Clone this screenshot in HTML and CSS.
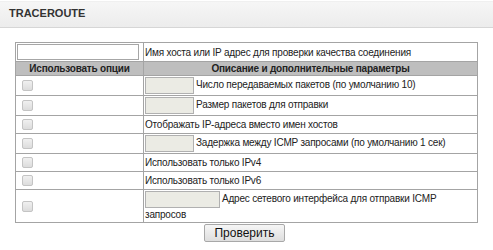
FILE: index.html
```html
<!DOCTYPE html>
<html lang="ru">
<head>
  <meta charset="UTF-8">
  <title>Traceroute</title>
  <link rel="stylesheet" href="styles.css">
</head>
<body>
  <div class="panel-head">TRACEROUTE</div>

  <form class="panel-body">
    <table class="opts">
      <tr>
        <td class="col-use"><input type="text" class="host"></td>
        <td>Имя хоста или IP адрес для проверки качества соединения</td>
      </tr>
      <tr class="head">
        <th>Использовать опции</th>
        <th>Описание и дополнительные параметры</th>
      </tr>
      <tr>
        <td class="col-use"><input type="checkbox" class="chk"></td>
        <td><input type="text" class="val">Число передаваемых пакетов (по умолчанию 10)</td>
      </tr>
      <tr>
        <td class="col-use"><input type="checkbox" class="chk"></td>
        <td><input type="text" class="val">Размер пакетов для отправки</td>
      </tr>
      <tr>
        <td class="col-use"><input type="checkbox" class="chk"></td>
        <td>Отображать IP-адреса вместо имен хостов</td>
      </tr>
      <tr>
        <td class="col-use"><input type="checkbox" class="chk"></td>
        <td><input type="text" class="val">Задержка между ICMP запросами (по умолчанию 1 сек)</td>
      </tr>
      <tr>
        <td class="col-use"><input type="checkbox" class="chk"></td>
        <td>Использовать только IPv4</td>
      </tr>
      <tr>
        <td class="col-use"><input type="checkbox" class="chk"></td>
        <td>Использовать только IPv6</td>
      </tr>
      <tr>
        <td class="col-use"><input type="checkbox" class="chk"></td>
        <td><input type="text" class="val wide">Адрес сетевого интерфейса для отправки ICMP запросов</td>
      </tr>
    </table>
    <div class="actions">
      <button type="button" class="btn">Проверить</button>
    </div>
  </form>
</body>
</html>
```

FILE: styles.css
```css
body {
  margin: 0;
  background: #fff;
  font-family: "Liberation Sans", Arial, sans-serif;
  font-size: 10px;
  letter-spacing: -0.2px;
  color: #222;
}

.panel-head {
  height: 25px;
  line-height: 23px;
  margin-top: 1px;
  padding-left: 9px;
  font-weight: bold;
  font-size: 11px;
  letter-spacing: 0;
  color: #333;
  background: linear-gradient(#f6f6f6, #ececec);
  border-top: 1px solid #f0f0f0;
  border-bottom: 1px solid #d6d6d6;
}

.panel-body {
  padding: 14px 0 0 15px;
}

.opts {
  width: 463px;
  border-collapse: collapse;
  border: 1px solid #9c9c9c;
}

.opts td,
.opts th {
  border: 1px solid #a4a4a4;
  padding: 1px 1px;
  height: 15px;
  line-height: 13px;
  vertical-align: middle;
  text-align: left;
}

.opts .col-use {
  width: 125px;
  padding-left: 1px;
}

.opts .head th {
  background: #bebebe;
  font-weight: bold;
  text-align: center;
  height: 12px;
  padding: 0;
}

.host {
  display: block;
  box-sizing: border-box;
  width: 122px;
  height: 16px;
  margin: 0;
  border: 1px solid #a6a6a6;
  background: #fff;
}

.val {
  box-sizing: border-box;
  width: 49px;
  height: 17px;
  margin: 0 2px 0 0;
  border: 1px solid #b0b0b0;
  background: #ebebe4;
  vertical-align: middle;
}

.val.wide {
  width: 75px;
}

.chk {
  appearance: none;
  display: block;
  width: 11px;
  height: 11px;
  margin: 0 0 0 5px;
  border: 1px solid #c4c4c4;
  border-radius: 2px;
  background: linear-gradient(#f0f0f0, #dcdcdc);
}

.actions {
  width: 463px;
  text-align: center;
  padding-top: 1px;
}

.btn {
  width: 81px;
  height: 18px;
  padding: 0;
  font-family: "Liberation Sans", Arial, sans-serif;
  font-size: 12px;
  color: #111;
  background: linear-gradient(#f6f6f6, #dedede);
  border: 1px solid #a8a8a8;
  border-radius: 2px;
  margin-left: -4px;
}
```
